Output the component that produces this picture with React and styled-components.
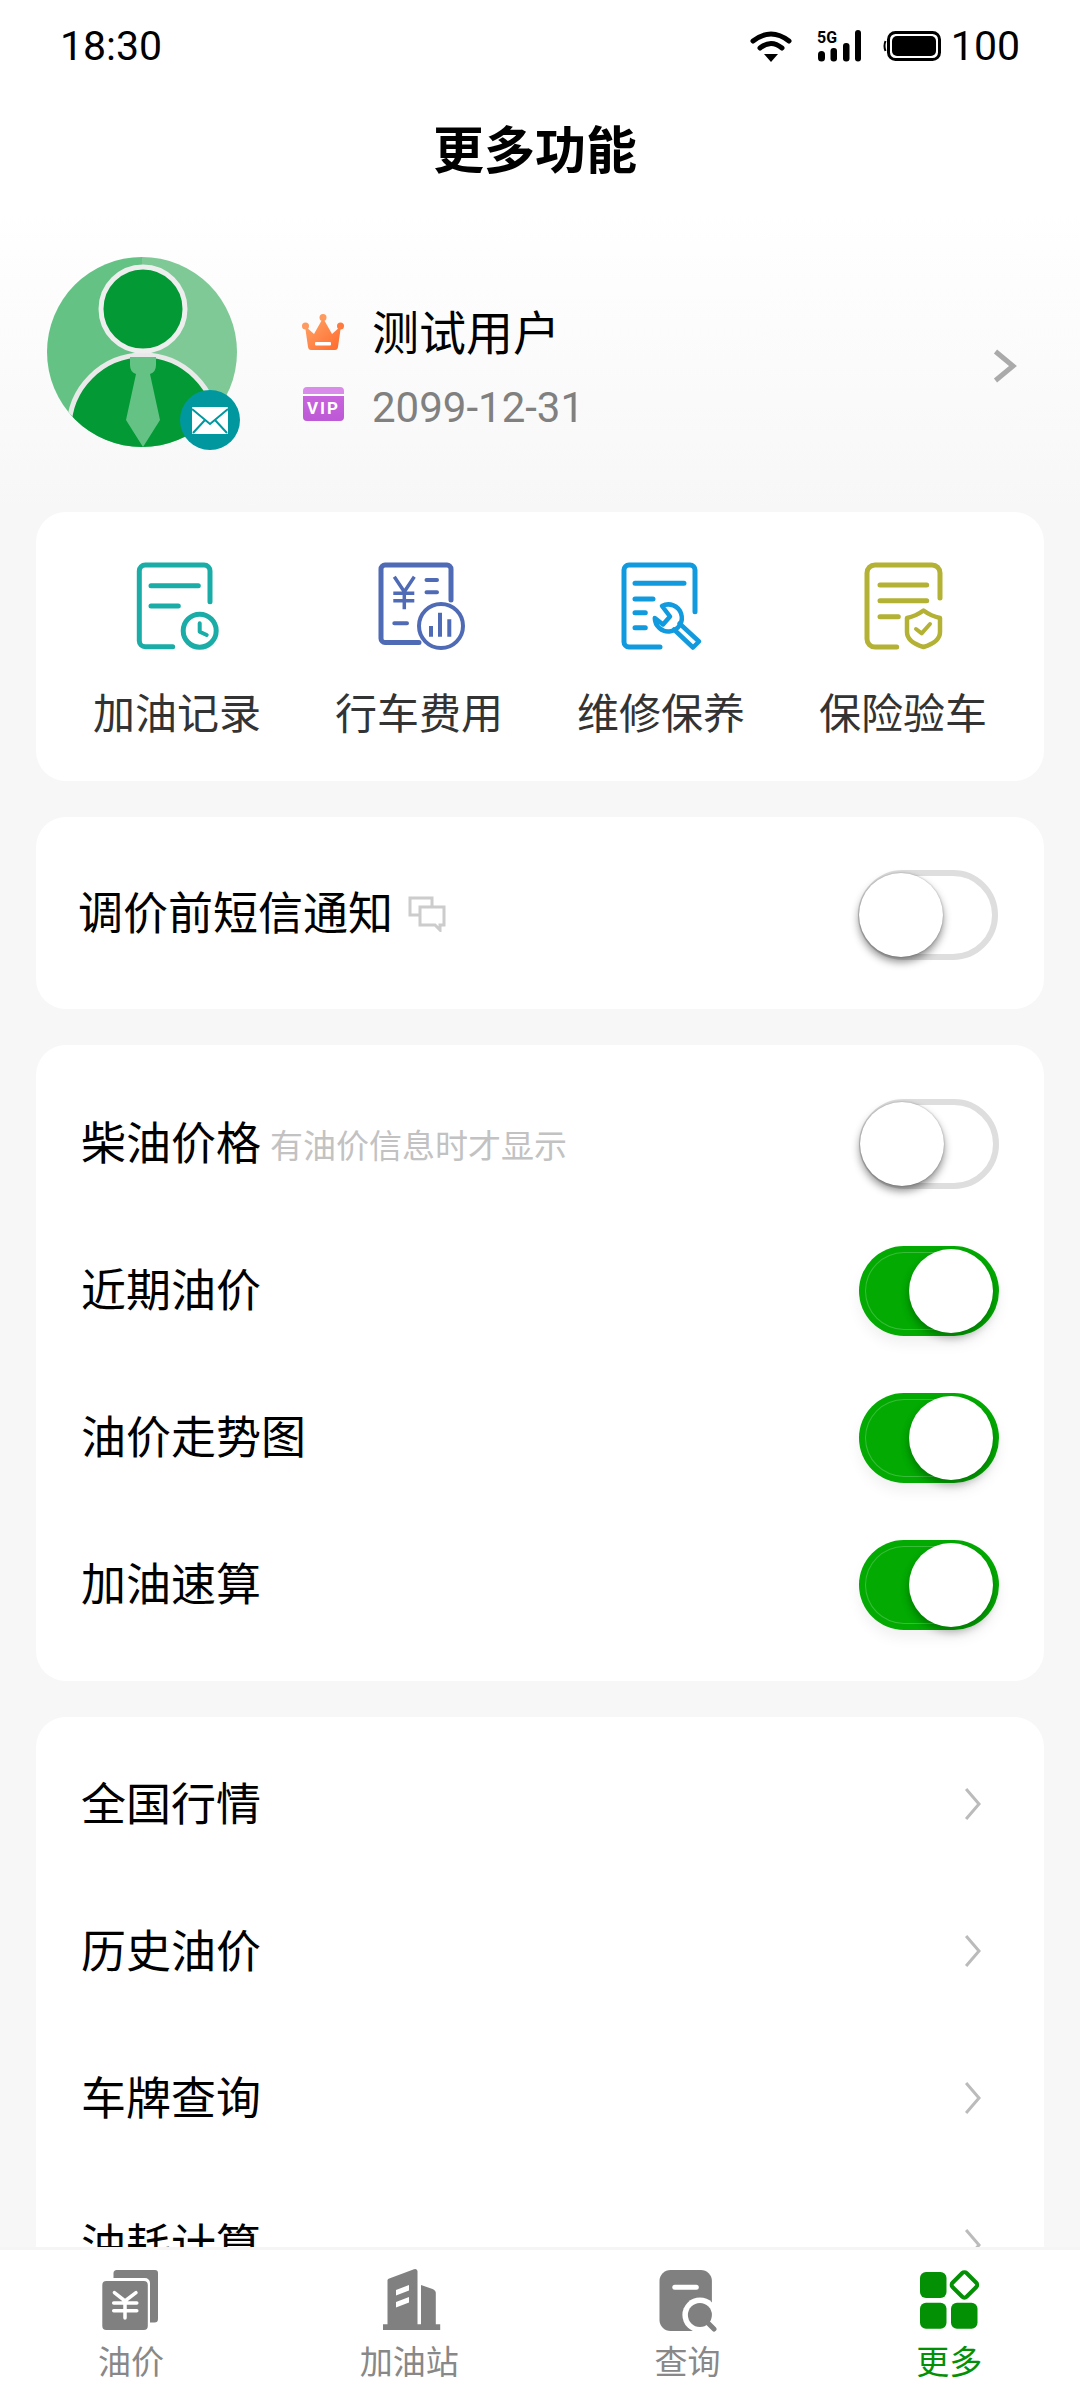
import React from 'react'
import styled, { createGlobalStyle } from 'styled-components'

const GlobalStyle = createGlobalStyle`
  html, body {
    margin: 0;
    padding: 0;
    background: #f7f7f7;
  }
  body {
    font-family: Roboto, "Noto Sans CJK SC", sans-serif;
  }
`

const Page = styled.div`
  width: 1080px;
  height: 2400px;
  display: flex;
  flex-direction: column;
  overflow: hidden;
  background: #f7f7f7;
`

const Scroller = styled.div`
  flex: 1;
  min-height: 0;
  overflow: hidden;
`

const Header = styled.header`
  height: 512px;
  background: linear-gradient(#fff 0, #fff 210px, #f7f7f7 512px);
`

const StatusBar = styled.div`
  height: 92px;
  display: flex;
  align-items: center;
  justify-content: space-between;
  padding: 0 60px 0 60px;
  font-size: 41px;
  color: #000;
`

const StatusIcons = styled.div`
  display: flex;
  align-items: center;
`

const BatteryText = styled.span`
  margin-left: 10px;
`

const Title = styled.h1`
  height: 110px;
  padding: 0 10px 6px 0;
  margin: 0;
  display: flex;
  align-items: center;
  justify-content: center;
  font-size: 51px;
  font-weight: 700;
  color: #000;
`

const Profile = styled.div`
  display: flex;
  padding: 49px 62px 0 47px;
`

const Avatar = styled.div`
  position: relative;
  width: 190px;
  height: 190px;
  flex: none;
`

const Badge = styled.div`
  position: absolute;
  right: -3px;
  bottom: -3px;
  width: 60px;
  height: 60px;
  border-radius: 50%;
  background: #00989e;
  display: flex;
  align-items: center;
  justify-content: center;
`

const Info = styled.div`
  margin-left: 65px;
  padding-top: 50px;
  display: flex;
  flex-direction: column;
  gap: 25px;
`

const InfoLine = styled.div`
  height: 50px;
  display: flex;
  align-items: center;
  gap: 28px;
  font-size: ${p => (p.$date ? 42 : 47)}px;
  color: ${p => (p.$date ? '#808080' : '#000')};
`

const NameText = styled.span`
  margin-top: -6px;
`

const VipBadge = styled.span`
  width: 41px;
  height: 34px;
  margin: -6px 0 0 1px;
  box-sizing: border-box;
  padding-top: 8px;
  border-radius: 4px;
  background: linear-gradient(#da8cea 0, #da8cea 7px, #fff 7px, #fff 9px, #c864dd 9px, #bd58d6 100%);
  color: #fff;
  font-size: 17px;
  font-weight: 700;
  letter-spacing: 2px;
  line-height: 26px;
  text-align: center;
`

const ProfileArrow = styled.div`
  margin-left: auto;
  margin-top: 91px;
  height: 34px;
`

const Cards = styled.main`
  display: flex;
  flex-direction: column;
  gap: 36px;
  padding: 0 36px;
`

const Card = styled.section`
  background: #fff;
  border-radius: 30px;
`

const QuickCard = styled(Card)`
  display: grid;
  grid-template-columns: repeat(4, 1fr);
  padding: 46px 20px 36px;
`

const QuickItem = styled.div`
  display: flex;
  flex-direction: column;
  align-items: center;
`

const QuickLabel = styled.span`
  margin-top: 31px;
  font-size: 42px;
  line-height: 60px;
  color: #333;
`

const SmsCard = styled(Card)`
  height: 192px;
  padding: 0 46px 0 42px;
  display: flex;
  align-items: center;
  justify-content: space-between;
`

const ListCard = styled(Card)`
  padding: ${p => p.$pad}px 0;
`

const Row = styled.div`
  height: 147px;
  padding: 0 ${p => (p.$link ? 62 : 45)}px 0 45px;
  display: flex;
  align-items: center;
  justify-content: space-between;
`

const Label = styled.div`
  display: flex;
  align-items: center;
  padding-bottom: 5px;
  font-size: 45px;
  color: #000;
`

const Hint = styled.span`
  margin-left: 9px;
  padding-top: 8px;
  font-size: 33px;
  color: #c2c2c2;
`

const ChatIcon = styled.svg`
  margin-left: 15px;
  margin-top: 6px;
`

const Switch = styled.div`
  position: relative;
  width: 140px;
  height: 90px;
  margin-top: 3px;
  box-sizing: border-box;
  border-radius: 45px;
  background: ${p => (p.$on ? '#02aa02' : '#fff')};
  border: ${p => (p.$on ? 'none' : '6px solid #dedede')};
  flex: none;
  box-shadow: ${p => (p.$on ? '0 8px 14px rgba(0, 0, 0, 0.06)' : 'none')};
  &::before {
    content: '';
    display: ${p => (p.$on ? 'block' : 'none')};
    position: absolute;
    left: 6px;
    top: 6px;
    bottom: 6px;
    width: 78px;
    border-radius: 39px 0 0 39px;
    border: 1px solid rgba(255, 255, 255, 0.22);
    border-right: none;
    box-sizing: border-box;
  }
`

const Knob = styled.div`
  position: absolute;
  top: ${p => (p.$on ? 3 : -3)}px;
  ${p => (p.$on ? 'right: 6px;' : 'left: -5px;')}
  width: 84px;
  height: 84px;
  border-radius: 50%;
  background: #fff;
  box-shadow: ${p => (p.$on ? '0 5px 8px rgba(0, 0, 0, 0.3)' : '0 5px 9px rgba(0, 0, 0, 0.45), 0 0 2px rgba(0, 0, 0, 0.3)')};
`

const TabBar = styled.nav`
  flex: none;
  height: 153px;
  box-sizing: border-box;
  border-top: 3px solid #f5f5f5;
  background: #fff;
  padding-top: 18px;
  display: flex;
  justify-content: space-around;
`

const Tab = styled.div`
  display: flex;
  flex-direction: column;
  align-items: center;
  font-size: 33px;
  color: ${p => (p.$active ? '#049004' : '#888')};
`

const TabLabel = styled.span`
  margin-top: 9px;
  line-height: 44px;
`

const Wifi = () => (
  <svg width="42" height="32" viewBox="0 0 42 32">
    <path d="M3 11Q21 -3 39 11" fill="none" stroke="#000" strokeWidth="5" strokeLinecap="round" />
    <path d="M10 18Q21 9 32 18" fill="none" stroke="#000" strokeWidth="5" strokeLinecap="round" />
    <path d="M14 24L28 24L21 32Z" fill="#000" />
  </svg>
)

const Signal = () => (
  <svg width="44" height="32" viewBox="0 0 44 32" overflow="visible" style={{ marginLeft: 25 }}>
    <text x="0" y="13" fontFamily="Roboto" fontSize="16" fontWeight="700" textLength="20" lengthAdjust="spacingAndGlyphs">5G</text>
    <rect x="1" y="21" width="7" height="10.500" rx="3.500" />
    <rect x="13.500" y="18" width="6.500" height="13.500" rx="3" />
    <rect x="26" y="13" width="6.500" height="18.500" rx="3" />
    <rect x="38" y="0" width="6" height="31.500" rx="3" />
  </svg>
)

const Battery = () => (
  <svg width="58" height="30" viewBox="0 0 58 30" style={{ marginLeft: 22 }}>
    <path d="M2.500 10Q0.500 15 2.500 20" fill="none" stroke="#000" strokeWidth="2" />
    <rect x="5.500" y="1.500" width="51" height="27" rx="7" fill="none" stroke="#000" strokeWidth="3" />
    <rect x="9" y="5" width="44" height="20" rx="5" />
  </svg>
)

const AvatarArt = () => (
  <svg width="190" height="190" viewBox="0 0 190 190">
    <defs>
      <clipPath id="avatarClip"><circle cx="95" cy="95" r="95" /></clipPath>
      <linearGradient id="avatarBg" x1="0" x2="1" y1="0" y2="0">
        <stop offset="0.5" stopColor="#65c285" />
        <stop offset="0.5" stopColor="#7ec996" />
      </linearGradient>
    </defs>
    <g clipPath="url(#avatarClip)">
      <rect width="190" height="190" fill="url(#avatarBg)" />
      <circle cx="96" cy="172" r="74" fill="#039a36" stroke="#e9e9e9" strokeWidth="5" />
      <path d="M83 100h26v8q0 7-6 9l10 46-17 27-17-27 10-46q-6-2-6-9z" fill="#65c285" />
      <circle cx="96" cy="52" r="42" fill="#039a36" stroke="#eee" strokeWidth="5" />
    </g>
  </svg>
)

const Envelope = () => (
  <svg width="36" height="27" viewBox="0 0 36 27">
    <rect width="36" height="27" rx="1" fill="#fff" />
    <path d="M0 2L18 17L36 2M1 26L13 13M35 26L23 13" fill="none" stroke="#00989e" strokeWidth="2" />
  </svg>
)

const Crown = () => (
  <svg width="42" height="36" viewBox="0 0 42 36">
    <defs>
      <linearGradient id="crownFill" x1="0" x2="1" y1="0" y2="1">
        <stop offset="0" stopColor="#ffa569" />
        <stop offset="1" stopColor="#ff6a2c" />
      </linearGradient>
    </defs>
    <circle cx="3.500" cy="12" r="3.500" fill="#ff9a5e" />
    <circle cx="21" cy="3.500" r="3.500" fill="#ff9a5e" />
    <circle cx="38.500" cy="12" r="3.500" fill="#ff7a3e" />
    <path d="M3 12L12 20L21 4L30 20L39 12L36 33Q35.500 36 33 36H9Q6.500 36 6 33Z" fill="url(#crownFill)" />
    <rect x="13" y="28" width="16" height="3.500" rx="1" fill="#fff" />
  </svg>
)

const Chevron = ({ w, h, color, sw }) => (
  <svg width={w} height={h} viewBox={`0 0 ${w} ${h}`}>
    <path d={`M${sw * 0.7} ${sw * 0.7}L${w - sw} ${h / 2}L${sw * 0.7} ${h - sw * 0.7}`} fill="none" stroke={color} strokeWidth={sw} />
  </svg>
)

const DocIcon = ({ color, children, d }) => (
  <svg width="96" height="96" viewBox="0 0 96 96" fill="none" stroke={color} strokeWidth="5" strokeLinecap="round" strokeLinejoin="round">
    <path d={d} />
    {children}
  </svg>
)

const quickItems = [
  {
    label: '加油记录',
    color: '#1aaca6',
    d: 'M81 43.700V13a6 6 0 0 0-6-6H16.300a6 6 0 0 0-6 6V82.700a6 6 0 0 0 6 6H43.700',
    art: (
      <>
        <path d="M22 27.700H69.300M22 48H49.300" />
        <circle cx="70.700" cy="72.700" r="16.500" />
        <path d="M70.700 65.300V73.700L77.700 77" strokeWidth="4" />
      </>
    ),
  },
  {
    label: '行车费用',
    color: '#4f6bb5',
    d: 'M80 42V11a4 4 0 0 0-4-4H14a4 4 0 0 0-4 4V80.500a4 4 0 0 0 4 4H48',
    art: (
      <>
        <path d="M23.300 18.700L33.300 33.700L43.300 18.700M33.300 33.700V51.300M22.300 35.300H43.300M22.300 42.700H43.300" strokeWidth="3.500" strokeLinecap="butt" />
        <path d="M55.500 22H66M55.500 34.300H66M23.300 65.300H36" strokeWidth="4" />
        <circle cx="70" cy="68" r="22" strokeWidth="4" />
        <path d="M60 68V78.700M69 54.700V78.700M78.300 61.300V78.700" strokeWidth="4" strokeLinecap="butt" />
      </>
    ),
  },
  {
    label: '维修保养',
    color: '#129ade',
    d: 'M82 53.700V12a5 5 0 0 0-5-5H16a5 5 0 0 0-5 5V84a5 5 0 0 0 5 5H47',
    art: (
      <>
        <path d="M22 25.300H71M22 41H40M22 54.700H32.300M22 69.700H32.300" />
        <path d="M49 48A13.500 13.500 0 1 1 41.800 60L50 66.500L57 58.500Z" strokeWidth="4.500" />
        <path d="M66.500 65.500L86 83.500L80 89.500L61 71.500" strokeWidth="4.500" />
      </>
    ),
  },
  {
    label: '保险验车',
    color: '#b3b235',
    d: 'M85 40V15a8 8 0 0 0-8-8H20a8 8 0 0 0-8 8V81a8 8 0 0 0 8 8H41.700',
    art: (
      <>
        <path d="M25 27H71.700M25 42.700H71.700M25 58.700H43.300" />
        <path d="M68.500 52.500Q76 58 85 60V74Q85 84 68.500 89Q52 84 52 74V60Q61 58 68.500 52.500Z" strokeWidth="4.500" />
        <path d="M61 71L66.700 75.300L75 66" strokeWidth="4" />
      </>
    ),
  },
]

const PriceTab = () => (
  <svg width="64" height="64" viewBox="0 0 64 64">
    <path d="M18 2H56a3 3 0 0 1 3 3V51a3.500 3.500 0 0 1-3.500 3.500H51V15a5 5 0 0 0-5-5H14.500V5a3 3 0 0 1 3.500-3z" fill="#808080" />
    <rect x="3.300" y="13" width="45.500" height="49" rx="4" fill="#808080" />
    <path d="M15.400 24.700L26 33L37 24.700M26 33V50M14.700 35H37.800M14.700 42.700H37.800" fill="none" stroke="#fff" strokeWidth="3.500" strokeLinecap="round" />
  </svg>
)

const StationTab = () => (
  <svg width="64" height="64" viewBox="0 0 64 64" fill="#808080">
    <path d="M6 56.300H63.200V62H6z" />
    <path d="M10.500 12.500Q10.500 11.300 11.600 10.800L37 1.200Q40.500 0.300 40.500 3.500V57H10.500z" />
    <path d="M44 17L55.500 21Q58.800 22.300 58.800 25V57H44z" />
    <path d="M19 22L32 17V22.500L19 27.500zM19 34L32 29V34.500L19 39.500z" fill="#fff" />
  </svg>
)

const SearchTab = () => (
  <svg width="64" height="64" viewBox="0 0 64 64">
    <rect x="4.500" y="2" width="52.400" height="61" rx="11" fill="#808080" />
    <rect x="17.300" y="16.800" width="26.500" height="5" rx="2.500" fill="#fff" />
    <path d="M52 54L60 62" stroke="#fff" strokeWidth="12" />
    <circle cx="44.900" cy="47" r="17.500" fill="#fff" />
    <circle cx="44.900" cy="47" r="12" fill="#808080" />
    <path d="M52.500 54.500L59 61" stroke="#808080" strokeWidth="5" strokeLinecap="round" />
  </svg>
)

const MoreTab = () => (
  <svg width="64" height="64" viewBox="0 0 64 64" fill="#049004">
    <rect x="3" y="4" width="26.500" height="26" rx="6" />
    <rect x="3" y="34.700" width="26.500" height="26" rx="6" />
    <rect x="34" y="34.700" width="26.500" height="26" rx="6" />
    <rect x="37.500" y="7" width="19.800" height="19.800" rx="3" transform="rotate(45 47.400 16.900)" fill="none" stroke="#049004" strokeWidth="4" />
  </svg>
)

const tabs = [
  { label: '油价', icon: <PriceTab /> },
  { label: '加油站', icon: <StationTab /> },
  { label: '查询', icon: <SearchTab /> },
  { label: '更多', icon: <MoreTab />, active: true },
]

const toggles = [
  { label: '柴油价格', hint: '有油价信息时才显示', on: false },
  { label: '近期油价', on: true },
  { label: '油价走势图', on: true },
  { label: '加油速算', on: true },
]

const links = ['全国行情', '历史油价', '车牌查询', '油耗计算']

export default function App () {
  return (
    <Page>
      <GlobalStyle />
      <Scroller>
        <Header>
          <StatusBar>
            <span>18:30</span>
            <StatusIcons>
              <Wifi />
              <Signal />
              <Battery />
              <BatteryText>100</BatteryText>
            </StatusIcons>
          </StatusBar>
          <Title>更多功能</Title>
          <Profile>
            <Avatar>
              <AvatarArt />
              <Badge><Envelope /></Badge>
            </Avatar>
            <Info>
              <InfoLine><Crown /><NameText>测试用户</NameText></InfoLine>
              <InfoLine $date><VipBadge>VIP</VipBadge>2099-12-31</InfoLine>
            </Info>
            <ProfileArrow><Chevron w={26} h={36} color='#aaa' sw={5} /></ProfileArrow>
          </Profile>
        </Header>
        <Cards>
          <QuickCard>
            {quickItems.map(item => (
              <QuickItem key={item.label}>
                <DocIcon color={item.color} d={item.d}>{item.art}</DocIcon>
                <QuickLabel>{item.label}</QuickLabel>
              </QuickItem>
            ))}
          </QuickCard>
          <SmsCard>
            <Label>
              调价前短信通知
              <ChatIcon width="38" height="36" viewBox="0 0 38 36" fill="none" stroke="#ccc" strokeWidth="3">
                <path d="M11 19H2V2H24V10" />
                <path d="M12 11H36V29H32V34L27 29H12Z" />
              </ChatIcon>
            </Label>
            <Switch><Knob /></Switch>
          </SmsCard>
          <ListCard $pad={24}>
            {toggles.map(t => (
              <Row key={t.label}>
                <Label>{t.label}{t.hint && <Hint>{t.hint}</Hint>}</Label>
                <Switch $on={t.on}><Knob $on={t.on} /></Switch>
              </Row>
            ))}
          </ListCard>
          <ListCard $pad={13}>
            {links.map(l => (
              <Row key={l} $link>
                <Label>{l}</Label>
                <Chevron w={18} h={34} color='#bbb' sw={3} />
              </Row>
            ))}
          </ListCard>
        </Cards>
      </Scroller>
      <TabBar>
        {tabs.map(t => (
          <Tab key={t.label} $active={t.active}>
            {t.icon}
            <TabLabel>{t.label}</TabLabel>
          </Tab>
        ))}
      </TabBar>
    </Page>
  )
}
